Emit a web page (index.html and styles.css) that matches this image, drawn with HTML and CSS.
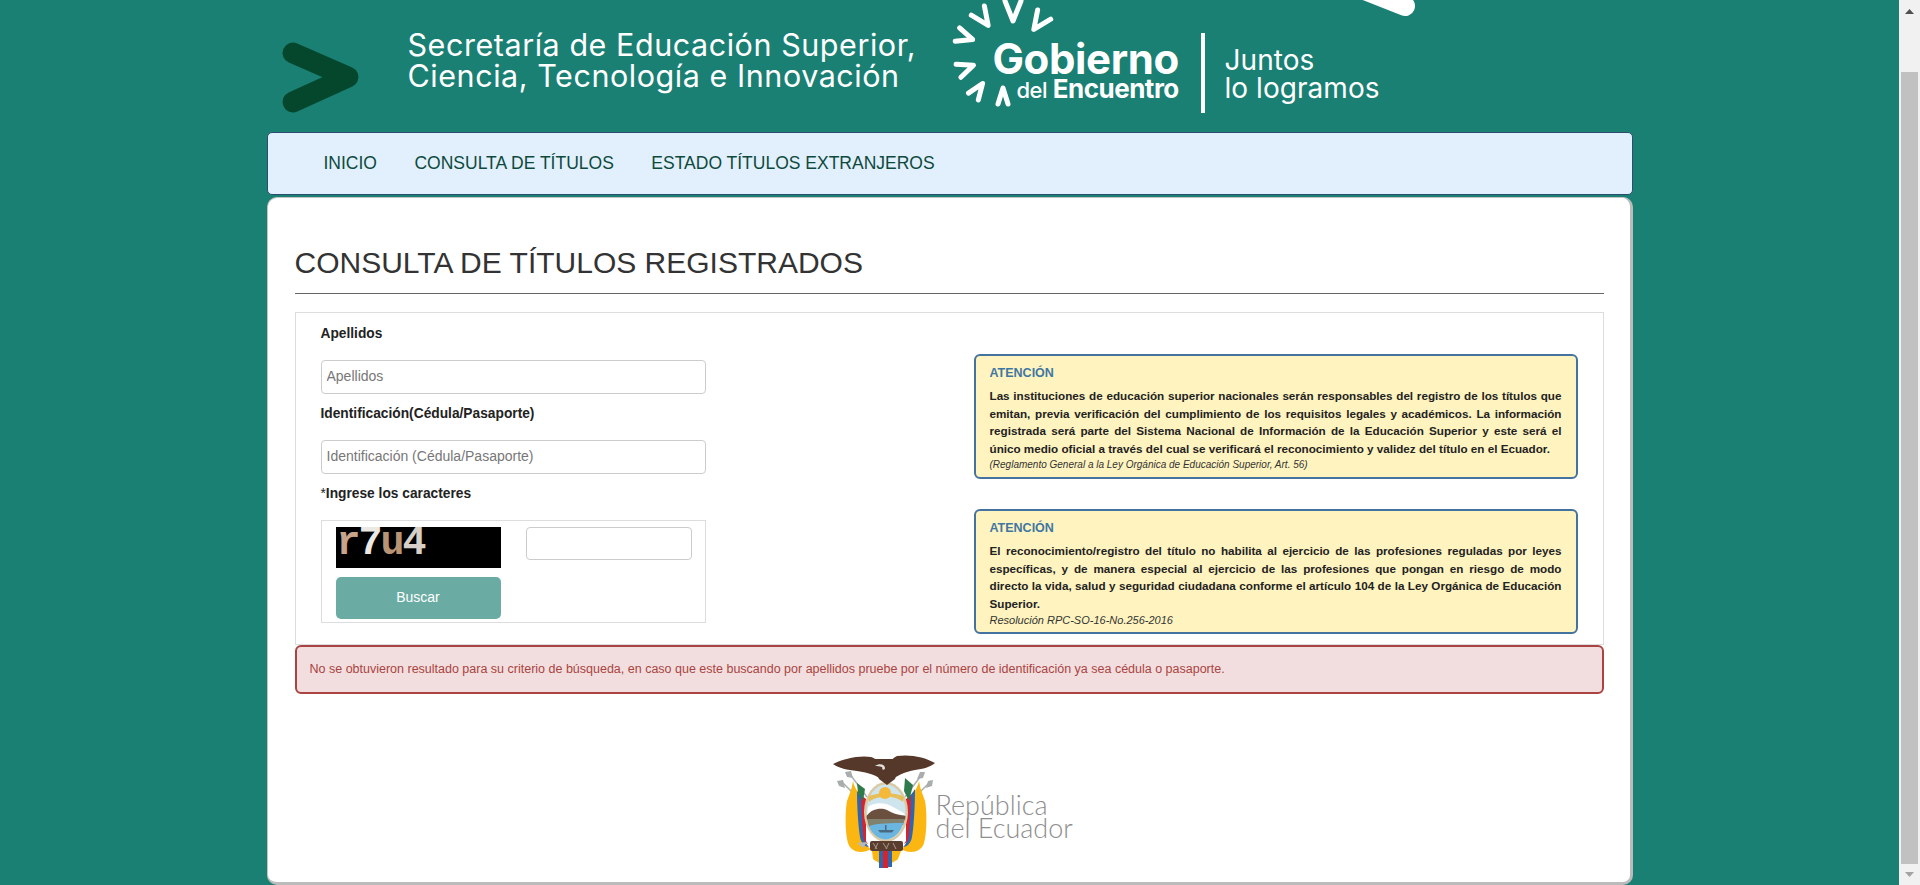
FILE: index.html
```html
<!DOCTYPE html>
<html lang="es">
	<head>
		<meta charset="utf-8">
		<title>Consulta de títulos registrados</title>
		<link rel="stylesheet" href="styles.css">
	</head>
	<body>
		<!-- pagina -->
		<div class="page">
			<div class="wrap">

				<!-- cabecera -->
				<header class="banner">
					<svg class="banner-art" viewBox="267 0 1366 132" width="1366" height="132">
						<polyline points="293,53 348,77 293,102" fill="none" stroke="#04472c" stroke-width="21" stroke-linecap="round" stroke-linejoin="round"/>
						<line x1="1367" y1="-9" x2="1405" y2="6" stroke="#fff" stroke-width="20" stroke-linecap="round"/>
						<g fill="none" stroke="#fff" stroke-width="5" stroke-linecap="round" stroke-linejoin="round">
							<polyline transform="translate(1013 11) rotate(0)" points="-8,-10 0,10 8,-10"/>
							<polyline transform="translate(983 18) rotate(-35)" points="-8,-9 0,9 8,-9"/>
							<polyline transform="translate(1039 22) rotate(35)" points="-8,-9 0,9 8,-9"/>
							<polyline transform="translate(965 37) rotate(-72)" points="-7,-8 0,8 7,-8"/>
							<polyline transform="translate(966 68) rotate(-110)" points="-7,-8 0,8 7,-8"/>
							<polyline transform="translate(978 90) rotate(-145)" points="-6,-8 0,8 6,-8"/>
							<polyline transform="translate(1003 96) rotate(180)" points="-5,-8 0,8 5,-8"/>
						</g>
						<rect x="1201" y="33" width="4" height="80" fill="#fff"/>
					</svg>
					<div class="sec-text">Secretaría de Educación Superior,<br>Ciencia, Tecnología e Innovación</div>
					<div class="gob-text">
						<div class="gob-big">Gobierno</div>
						<div class="gob-small"><span class="gob-del">del</span> Encuentro</div>
					</div>
					<div class="juntos-text">Juntos<br>lo logramos</div>
				</header>

				<!-- menu -->
				<nav class="navbar">
					<a href="#" class="nav-link">INICIO</a>
					<a href="#" class="nav-link">CONSULTA DE TÍTULOS</a>
					<a href="#" class="nav-link">ESTADO TÍTULOS EXTRANJEROS</a>
				</nav>

				<!-- contenido -->
				<main class="card">
					<h1 class="title">CONSULTA DE TÍTULOS REGISTRADOS</h1>

					<div class="panel">
						<form class="form-col">
							<label class="field-label">Apellidos</label>
							<input class="field" type="text" placeholder="Apellidos">
							<label class="field-label">Identificación(Cédula/Pasaporte)</label>
							<input class="field" type="text" placeholder="Identificación (Cédula/Pasaporte)">
							<label class="field-label"><span class="req">*</span>Ingrese los caracteres</label>
							<div class="captcha-box">
								<div class="captcha-left">
									<div class="captcha-img"><span class="c1">r</span><span class="c2">7</span><span class="c3">u</span><span class="c4">4</span></div>
									<button class="btn-buscar" type="button">Buscar</button>
								</div>
								<input class="field captcha-field" type="text">
							</div>
						</form>

						<div class="notes-col">
							<div class="note">
								<div class="note-title">ATENCIÓN</div>
								<p class="note-text">Las instituciones de educación superior nacionales serán responsables del registro de los títulos que emitan, previa verificación del cumplimiento de los requisitos legales y académicos. La información registrada será parte del Sistema Nacional de Información de la Educación Superior y este será el único medio oficial a través del cual se verificará el reconocimiento y validez del título en el Ecuador.</p>
								<div class="note-cite">(Reglamento General a la Ley Orgánica de Educación Superior, Art. 56)</div>
							</div>
							<div class="note">
								<div class="note-title">ATENCIÓN</div>
								<p class="note-text">El reconocimiento/registro del título no habilita al ejercicio de las profesiones reguladas por leyes específicas, y de manera especial al ejercicio de las profesiones que pongan en riesgo de modo directo la vida, salud y seguridad ciudadana conforme el artículo 104 de la Ley Orgánica de Educación Superior.</p>
								<div class="note-cite note-cite-wide">Resolución RPC-SO-16-No.256-2016</div>
							</div>
						</div>
					</div>

					<div class="alert">No se obtuvieron resultado para su criterio de búsqueda, en caso que este buscando por apellidos pruebe por el número de identificación ya sea cédula o pasaporte.</div>

					<!-- escudo -->
					<div class="footer-logo">
						<svg class="emblem" viewBox="0 0 111 125" width="111" height="125">
							<!-- puntas de lanza -->
							<g stroke="#a9adad" stroke-width="1.4">
								<line x1="16" y1="36" x2="40" y2="60"/>
								<line x1="24" y1="28" x2="42" y2="52"/>
								<line x1="106" y1="36" x2="82" y2="60"/>
								<line x1="98" y1="28" x2="80" y2="52"/>
							</g>
							<path d="M12 36l6-1 2 8-6-2zM20 27l6-1 2 7-6-1zM108 35l-5 1-2 7 6-2zM100 27l-5 0-3 7 6-1z" fill="#a9adad"/>
							<!-- banderas -->
							<path d="M28 36C30 46 36 50 40 54L40 92C40 98 42 102 46 104 38 109 26 108 23 98 20 88 20 66 22 56 24 50 27 44 28 36Z" fill="#fbb612"/>
							<path d="M94 36C92 46 86 50 82 54L82 92C82 98 80 102 76 104 84 109 96 108 99 98 102 88 102 66 100 56 98 50 95 44 94 36Z" fill="#fbb612"/>
							<path d="M32 46C34 50 38 52 40 54L40 94C40 98 42 100 44 102 40 102 36 98 35 92 33 80 32 60 32 46Z" fill="#2f66b0"/>
							<path d="M90 44C88 48 84 51 82 54L82 94C82 98 80 100 78 102 82 102 86 98 87 92 89 80 90 58 90 44Z" fill="#2f66b0"/>
							<path d="M36 50L41 54V96L43 99C40 98 38 94 38 88 37 76 36 62 36 50Z" fill="#d4252f"/>
							<path d="M86 50L81 54V96L79 99C82 98 84 94 84 88 85 76 86 62 86 50Z" fill="#d4252f"/>
							<path d="M32 38L40 44 38 56 33 48Z" fill="#2f7a4a"/>
							<path d="M80 33L88 40 84 56 79 46Z" fill="#2f7a4a"/>
							<!-- ovalo -->
							<ellipse cx="61" cy="67" rx="22" ry="30" fill="#d9caa5"/>
							<ellipse cx="61" cy="67" rx="19.500" ry="27.500" fill="#cfe5ee"/>
							<path d="M43 52C50 47 72 47 79 52L78 57C70 50 52 50 44 57Z" fill="#e6bf5a"/>
							<circle cx="60" cy="48" r="6" fill="#f4b93a"/>
							<path d="M43 62C50 56 62 58 68 62L79 68 80 70H42Z" fill="#fff"/>
							<path d="M41.500 71C46 64 56 62 62 65 68 69 76 70 80.500 71L80 75H42Z" fill="#6b5040"/>
							<path d="M42 74H80L78 80H60C54 80 48 82 44 82Z" fill="#80816f"/>
							<path d="M44 81C52 78 68 78 78 78 76 88 68 94 61 94.500 54 94 47 90 44 81Z" fill="#6ab6e0"/>
							<path d="M53 85H69L67 87.500H55Z" fill="#4a6a80"/>
							<rect x="60" y="80" width="1.500" height="6" fill="#4a6a80"/>
							<!-- ramas y haz -->
							<path d="M32 98L42 97 38 103Z" fill="#b8baba"/>
							<rect x="45" y="96" width="33" height="10" rx="2" fill="#5a3d2e"/>
							<path d="M48 98l4 6M53 98l-3 6M58 98l4 6M64 98l-3 6M68 98l3 6" stroke="#a89a8c" stroke-width="1" fill="none"/>
							<path d="M47 106H76L73 114C70 117 66 116 66 122H55C55 116 51 117 48 114Z" fill="#fbb612"/>
							<rect x="54" y="106" width="4" height="17" fill="#2f66b0"/>
							<rect x="58" y="106" width="5" height="17" fill="#d4252f"/>
							<rect x="63" y="106" width="4" height="16" fill="#2f66b0"/>
							<!-- aguila -->
							<path d="M8 19C18 14 34 10 46 12 52 14 54 18 57 21L58 36C52 30 44 28 32 26 22 25 14 23 8 19Z" fill="#55382a"/>
							<path d="M110 18C100 12 85 9 72 11 68 13 64 17 62 21L66 36C72 30 80 27 90 25 98 24 105 22 110 18Z" fill="#55382a"/>
							<path d="M46 14H76L70 34 62 40 54 34Z" fill="#55382a"/>
							<path d="M50 21C54 18 60 19 60 23 60 25 58 25 57 24 59 22 55 21 50 21Z" fill="#e4e0da"/>
						</svg>
						<div class="rep-text">República<br>del Ecuador</div>
					</div>
				</main>
			</div>
		</div>

		<!-- barra de desplazamiento -->
		<div class="scrollbar">
			<svg class="scroll-arrow" viewBox="0 0 21 17" width="21" height="17"><path d="M6 14L10.500 9 15 14Z" fill="#505050"/></svg>
			<div class="scroll-track"><div class="scroll-thumb"></div></div>
			<svg class="scroll-arrow" viewBox="0 0 21 17" width="21" height="17"><path d="M6 4L10.500 9 15 4Z" fill="#a3a3a3"/></svg>
		</div>
	</body>
</html>
```

FILE: styles.css
```css
*{
	margin: 0;
	padding: 0;
	box-sizing: border-box;
}

body{
	display: flex;
	height: 885px;
	overflow: hidden;
	background-color: #1a8073;
	font-family: "Liberation Sans", Arial, sans-serif;
	color: #333;
}

.page{
	flex: 1;
	min-width: 0;
}

.wrap{
	width: 1366px;
	margin: 0 auto;
}

/* cabecera */
.banner{
	position: relative;
	display: flex;
	height: 132px;
	overflow: hidden;
	color: #fff;
}

.banner-art{
	position: absolute;
	top: 0;
	left: 0;
}

.sec-text{
	width: 585px;
	margin-left: 141px;
	padding-top: 29px;
	font-family: Inter, sans-serif;
	font-size: 30.500px;
	line-height: 31px;
	letter-spacing: .55px;
	white-space: nowrap;
}

.gob-text{
	width: 232px;
	padding-top: 36px;
	font-family: Inter, sans-serif;
	font-weight: 700;
}

.gob-big{
	font-size: 42px;
	line-height: 46px;
	letter-spacing: -.4px;
}

.gob-small{
	margin-top: -6px;
	padding-left: 24px;
	font-size: 26px;
	line-height: 26px;
	letter-spacing: -.5px;
}

.gob-del{
	font-weight: 500;
	font-size: 22px;
}

.juntos-text{
	padding-top: 46px;
	font-family: Inter, sans-serif;
	font-size: 28px;
	line-height: 28px;
	letter-spacing: .05px;
	white-space: nowrap;
}

/* menu */
.navbar{
	display: flex;
	align-items: center;
	height: 63px;
	padding-left: 56px;
	background-color: #e1f0fc;
	border: 1px solid #2e4d6e;
	border-radius: 5px;
}

.nav-link{
	margin-right: 37.500px;
	color: #0e4a3c;
	font-size: 17.500px;
	text-decoration: none;
}

/* tarjeta */
.card{
	height: 688px;
	margin-top: 2px;
	padding: 0 26px 0 27px;
	background-color: #fff;
	border: 1px solid #c4c4c4;
	border-right: 3px solid #bbb;
	border-bottom: 3px solid #bbb;
	border-radius: 10px;
}

.title{
	height: 96px;
	padding-top: 48px;
	border-bottom: 1px solid #666;
	font-size: 30px;
	font-weight: 400;
	line-height: 34px;
	color: #333;
}

.panel{
	display: flex;
	height: 333px;
	margin-top: 18px;
	padding-left: 25px;
	border: 1px solid #ddd;
}

.form-col{
	width: 385px;
	padding-top: 1px;
}

.field-label{
	display: block;
	height: 46px;
	padding-top: 10px;
	font-size: 13.750px;
	font-weight: 700;
	line-height: 20px;
	color: #222;
}

.req{
	font-weight: 400;
}

.field{
	display: block;
	width: 100%;
	height: 34px;
	padding: 0 5px 2px;
	background-color: #fff;
	border: 1px solid #ccc;
	border-radius: 4px;
	font-family: "Liberation Sans", Arial, sans-serif;
	font-size: 14px;
	color: #555;
}

.field::placeholder{
	color: #777;
}

.captcha-box{
	display: flex;
	height: 103px;
	padding: 6px 13px 0 14px;
	border: 1px solid #ddd;
}

.captcha-left{
	width: 166px;
	margin-right: 25px;
}

.captcha-img{
	height: 41px;
	padding-left: 1px;
	background-color: #000;
	font-family: "Liberation Mono", monospace;
	font-size: 40px;
	font-weight: 700;
	line-height: 33px;
	letter-spacing: -2px;
	white-space: nowrap;
}

.c1{ color: #c8a48c; }
.c2{ color: #ece8e4; }
.c3{ color: #b89474; }
.c4{ color: #d8d0c8; }

.btn-buscar{
	display: block;
	width: 100%;
	height: 42px;
	margin-top: 9px;
	padding-bottom: 2px;
	background-color: #6aaca4;
	border: 0;
	border-radius: 5px;
	font-family: "Liberation Sans", Arial, sans-serif;
	font-size: 14px;
	color: #fff;
}

.captcha-field{
	width: 166px;
	height: 33px;
}

/* avisos */
.notes-col{
	width: 604px;
	margin-left: 268px;
	padding-top: 41px;
}

.note{
	height: 125px;
	margin-bottom: 30px;
	padding: 9px 14px 0;
	background-color: #fff3bf;
	border: 2px solid #44739f;
	border-radius: 6px;
}

.note-title{
	font-size: 12.500px;
	font-weight: 700;
	line-height: 16px;
	color: #3f77a3;
}

.note-text{
	margin-top: 6px;
	font-size: 11.680px;
	font-weight: 700;
	line-height: 17.600px;
	text-align: justify;
	color: #222;
}

.note-cite{
	margin-top: 1px;
	font-size: 10px;
	font-style: italic;
	line-height: 14px;
	color: #333;
}

.note-cite-wide{
	font-size: 11px;
}

.alert{
	height: 49px;
	padding: 0 13px;
	background-color: #f2dede;
	border: 2px solid #a94442;
	border-radius: 6px;
	font-size: 12.500px;
	line-height: 44px;
	color: #a94442;
}

/* escudo */
.footer-logo{
	display: flex;
	margin-top: 51px;
	padding-left: 530px;
}

.emblem{
	filter: blur(.4px);
}

.rep-text{
	padding-top: 48px;
	font-family: Lato, sans-serif;
	font-size: 27px;
	font-weight: 300;
	line-height: 23px;
	color: #8e8e8e;
}

/* barra de desplazamiento */
.scrollbar{
	display: flex;
	flex-direction: column;
	width: 21px;
	height: 885px;
	background-color: #f1f1f1;
}

.scroll-arrow{
	display: block;
	flex: none;
}

.scroll-track{
	flex: 1;
	padding: 55px 2px 4px;
}

.scroll-thumb{
	height: 100%;
	background-color: #c1c1c1;
}
```
